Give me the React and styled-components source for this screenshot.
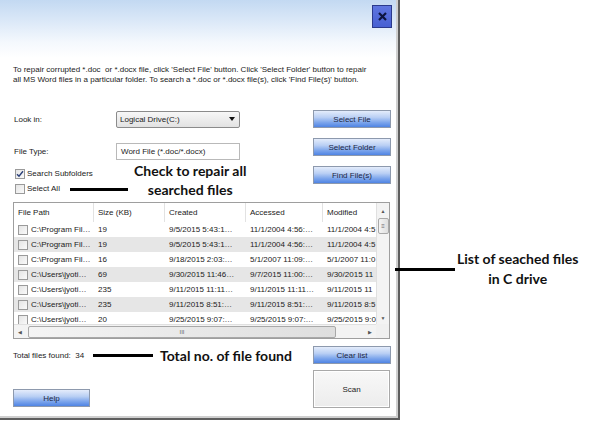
import styled, { createGlobalStyle } from "styled-components";

const GlobalStyle = createGlobalStyle`
  html, body {
    margin: 0;
    padding: 0;
    background: #ffffff;
  }
  body {
    font-family: "Liberation Sans", Arial, sans-serif;
  }
`;

const ui = `"Liberation Sans", Arial, sans-serif`;
const callout = `"Liberation Sans Narrow", Lato, "Liberation Sans", sans-serif`;

const Page = styled.div`
  position: relative;
  display: flex;
  width: 590px;
  height: 421px;
  overflow: hidden;
  background: #fff;
`;

const Dialog = styled.div`
  box-sizing: border-box;
  width: 400px;
  height: 420px;
  flex: none;
  display: flex;
  flex-direction: column;
  border-right: 2px solid #5e5e5e;
  border-bottom: 2px solid #5e5e5e;
  box-shadow: inset -2px -2px 0 #cfcfcf;
  background: linear-gradient(180deg, #c3d9f2 0px, #dce9f8 22px, #f4f8fd 42px, #ffffff 58px);
  font-family: ${ui};
  font-size: 8px;
  color: #222;
`;

const TitleBar = styled.div`
  display: flex;
  justify-content: flex-end;
  padding: 5px 6px 0 0;
  height: 30px;
  box-sizing: border-box;
`;

const CloseButton = styled.div`
  width: 20px;
  height: 23px;
  box-sizing: border-box;
  border: 1px solid #2b3a8c;
  background: linear-gradient(180deg, #5f76e0, #4760d2);
  display: flex;
  align-items: center;
  justify-content: center;
`;

const Intro = styled.p`
  margin: 35px 0 0 13px;
  line-height: 10px;
  font-size: 8px;
  span {
    display: block;
    white-space: nowrap;
  }
`;

const FormArea = styled.div`
  display: flex;
  justify-content: space-between;
  margin-top: 25px;
  padding: 0 7px 0 14px;
`;

const Fields = styled.div`
  display: flex;
  flex-direction: column;
`;

const FieldRow = styled.div`
  display: flex;
  align-items: center;
  height: 18px;
  margin-top: ${(p) => p.$gap || 0}px;
`;

const Label = styled.span`
  width: 102px;
`;

const Select = styled.div`
  box-sizing: border-box;
  width: 124px;
  height: 17px;
  border: 1px solid #8b8b8b;
  border-radius: 2px;
  background: linear-gradient(180deg, #f7f7f7, #e2e2e2);
  display: flex;
  align-items: center;
  justify-content: space-between;
  padding: 0 4px 0 3px;
`;

const Arrow = styled.span`
  width: 0;
  height: 0;
  border-left: 3px solid transparent;
  border-right: 3px solid transparent;
  border-top: 4px solid #111;
`;

const TextBox = styled.div`
  box-sizing: border-box;
  width: 124px;
  height: 17px;
  border: 1px solid #b9b9b9;
  background: #fff;
  display: flex;
  align-items: center;
  padding-left: 4px;
`;

const CheckRow = styled.label`
  display: flex;
  align-items: center;
  gap: 2px;
  height: 15px;
  margin-top: ${(p) => p.$gap || 0}px;
  margin-left: 1px;
`;

const Box = styled.span`
  box-sizing: border-box;
  width: 10px;
  height: 10px;
  flex: none;
  border: 1px solid #9a9a9a;
  background: linear-gradient(135deg, #e4e4e4, #fafafa);
  display: flex;
  align-items: center;
  justify-content: center;
`;

const ButtonColumn = styled.div`
  display: flex;
  flex-direction: column;
  gap: 10px;
`;

const BlueButton = styled.div`
  box-sizing: border-box;
  width: ${(p) => p.$w || 78}px;
  height: 18px;
  border: 1px solid #8d99ad;
  background: linear-gradient(180deg, #e4ecfb 0%, #b9cff4 40%, #7fa7ec 70%, #4f84e4 100%);
  display: flex;
  align-items: center;
  justify-content: center;
  color: #1b2645;
`;

const PlainButton = styled.div`
  box-sizing: border-box;
  width: 77px;
  height: 38px;
  border: 1px solid #a9a9a9;
  box-shadow: inset 0 0 0 1px #ffffff;
  background: linear-gradient(180deg, #f8f8f8, #ececec);
  display: flex;
  align-items: center;
  justify-content: center;
  color: #222;
`;

const Table = styled.div`
  box-sizing: border-box;
  margin: 6px 8px 0 13px;
  height: 137px;
  border: 1px solid #9e9e9e;
  background: #fff;
  display: grid;
  grid-template-columns: 1fr 13px;
  grid-template-rows: 1fr 14px;
`;

const ListView = styled.div`
  overflow: hidden;
`;

const Row = styled.div`
  display: grid;
  grid-template-columns: 80px 71px 81px 77px 60px;
  height: ${(p) => (p.$head ? 19 : 15)}px;
  align-items: center;
  background: ${(p) => (p.$shade ? "#e6e6e6" : "#fff")};
  white-space: nowrap;
`;

const Cell = styled.div`
  display: flex;
  align-items: center;
  gap: 3px;
  height: 100%;
  overflow: hidden;
  padding-left: 4px;
  border-right: ${(p) => (p.$head ? "1px solid #e2e2e2" : "none")};
`;

const VScroll = styled.div`
  border-left: 1px solid #e0e0e0;
  background: #f3f3f3;
  display: flex;
  flex-direction: column;
  align-items: center;
  justify-content: space-between;
  padding: 5px 0 3px;
`;

const Thumb = styled.div`
  box-sizing: border-box;
  width: ${(p) => p.$w}px;
  height: ${(p) => p.$h}px;
  border: 1px solid #a8a8a8;
  border-radius: 2px;
  background: linear-gradient(90deg, #f4f4f4, #dedede);
  display: flex;
  align-items: center;
  justify-content: center;
  font-size: 6px;
  color: #666;
`;

const VTrack = styled.div`
  flex: 1;
  display: flex;
  flex-direction: column;
  align-items: center;
  padding-top: 4px;
`;

const HScroll = styled.div`
  border-top: 1px solid #e0e0e0;
  background: #f3f3f3;
  display: flex;
  align-items: center;
  padding: 0 4px;
  gap: 6px;
`;

const Spacer = styled.div`
  flex: 1;
`;

const Corner = styled.div`
  background: #f0f0f0;
`;

const Glyph = styled.span`
  font-size: 5px;
  color: #555;
`;

const Footer = styled.div`
  display: flex;
  justify-content: space-between;
  margin-top: 7px;
  padding: 0 7px 0 13px;
`;

const FooterLeft = styled.div`
  display: flex;
  flex-direction: column;
  justify-content: space-between;
  height: 61px;
`;

const TotalText = styled.div`
  height: 18px;
  display: flex;
  align-items: center;
`;

const FooterRight = styled.div`
  display: flex;
  flex-direction: column;
  gap: 6px;
`;

const Callout = styled.div`
  font-family: ${callout};
  font-weight: 700;
  font-size: 14px;
  color: #111;
  text-align: center;
  line-height: ${(p) => p.$lh || 19}px;
  white-space: nowrap;
`;

const Pointer = styled.div`
  width: ${(p) => p.$w}px;
  height: 3px;
  background: #000;
  margin-bottom: ${(p) => p.$drop || 0}px;
`;

const Overlay = styled.div`
  position: absolute;
  display: flex;
  align-items: ${(p) => p.$align || "center"};
  gap: ${(p) => p.$gap || 0}px;
`;

const SideNote = styled.div`
  display: flex;
  align-items: center;
  align-self: flex-start;
  margin: 249px 0 0 -5px;
  gap: 2px;
`;

const rows = [
  ["C:\\Program Fil…", "19", "9/5/2015 5:43:1…", "11/1/2004 4:56:…", "11/1/2004 4:5"],
  ["C:\\Program Fil…", "19", "9/5/2015 5:43:1…", "11/1/2004 4:56:…", "11/1/2004 4:5"],
  ["C:\\Program Fil…", "16", "9/18/2015 2:03:…", "5/1/2007 11:09:…", "5/1/2007 11:0"],
  ["C:\\Users\\jyoti…", "69", "9/30/2015 11:46…", "9/7/2015 11:00:…", "9/30/2015 11"],
  ["C:\\Users\\jyoti…", "235", "9/11/2015 11:11…", "9/11/2015 11:11…", "9/11/2015 11"],
  ["C:\\Users\\jyoti…", "235", "9/11/2015 8:51:…", "9/11/2015 8:51:…", "9/11/2015 8:5"],
  ["C:\\Users\\jyoti…", "20", "9/25/2015 9:07:…", "9/25/2015 9:07:…", "9/25/2015 9:0"],
];

const Check = () => (
  <svg width="8" height="8" viewBox="0 0 8 8">
    <path d="M1 4.2 L3 6.3 L7 1.2" fill="none" stroke="#2a3f78" strokeWidth="1.4" />
  </svg>
);

const App = () => (
  <>
    <GlobalStyle />
    <Page>
      <Dialog>
        <TitleBar>
          <CloseButton>
            <svg width="9" height="9" viewBox="0 0 9 9">
              <path d="M1 1 L8 8 M8 1 L1 8" stroke="#0d153f" strokeWidth="2.2" />
            </svg>
          </CloseButton>
        </TitleBar>
        <Intro>
          <span>
            To repair corrupted *.doc&nbsp; or *.docx file, click 'Select File' button. Click 'Select Folder' button to repair
          </span>
          <span>all MS Word files in a particular folder. To search a *.doc or *.docx file(s), click 'Find File(s)' button.</span>
        </Intro>
        <FormArea>
          <Fields>
            <FieldRow>
              <Label>Look in:</Label>
              <Select>
                Logical Drive(C:)
                <Arrow />
              </Select>
            </FieldRow>
            <FieldRow $gap={14}>
              <Label>File Type:</Label>
              <TextBox>Word File (*.doc/*.docx)</TextBox>
            </FieldRow>
            <CheckRow $gap={6}>
              <Box>
                <Check />
              </Box>
              Search Subfolders
            </CheckRow>
            <CheckRow>
              <Box />
              Select All
            </CheckRow>
          </Fields>
          <ButtonColumn>
            <BlueButton>Select File</BlueButton>
            <BlueButton>Select Folder</BlueButton>
            <BlueButton>Find File(s)</BlueButton>
          </ButtonColumn>
        </FormArea>

        <Table>
          <ListView>
            <Row $head>
              <Cell $head>File Path</Cell>
              <Cell $head>Size (KB)</Cell>
              <Cell $head>Created</Cell>
              <Cell $head>Accessed</Cell>
              <Cell $head>Modified</Cell>
            </Row>
            {rows.map((r, i) => (
              <Row key={i} $shade={i % 2 === 1}>
                <Cell>
                  <Box />
                  {r[0]}
                </Cell>
                <Cell>{r[1]}</Cell>
                <Cell>{r[2]}</Cell>
                <Cell>{r[3]}</Cell>
                <Cell>{r[4]}</Cell>
              </Row>
            ))}
          </ListView>
          <VScroll>
            <Glyph>▲</Glyph>
            <VTrack>
              <Thumb $w={11} $h={16}>≡</Thumb>
            </VTrack>
            <Glyph>▼</Glyph>
          </VScroll>
          <HScroll>
            <Glyph>◀</Glyph>
            <Thumb $w={308} $h={12}>III</Thumb>
            <Spacer />
            <Glyph>▶</Glyph>
          </HScroll>
          <Corner />
        </Table>

        <Footer>
          <FooterLeft>
            <TotalText>Total files found:&nbsp; 34</TotalText>
            <BlueButton $w={77}>Help</BlueButton>
          </FooterLeft>
          <FooterRight>
            <BlueButton>Clear list</BlueButton>
            <PlainButton>Scan</PlainButton>
          </FooterRight>
        </Footer>
      </Dialog>

      <SideNote>
        <Pointer $w={60} />
        <Callout $lh={20}>
          List of seached files
          <br />
          in C drive
        </Callout>
      </SideNote>

      <Overlay style={{ left: 70, top: 161 }} $gap={6} $align="flex-end">
        <Pointer $w={58} $drop={8} />
        <Callout>
          Check to repair all
          <br />
          searched files
        </Callout>
      </Overlay>
      <Overlay style={{ left: 93, top: 346 }} $gap={7}>
        <Pointer $w={60} />
        <Callout>Total no. of file found</Callout>
      </Overlay>
    </Page>
  </>
);

export default App;
